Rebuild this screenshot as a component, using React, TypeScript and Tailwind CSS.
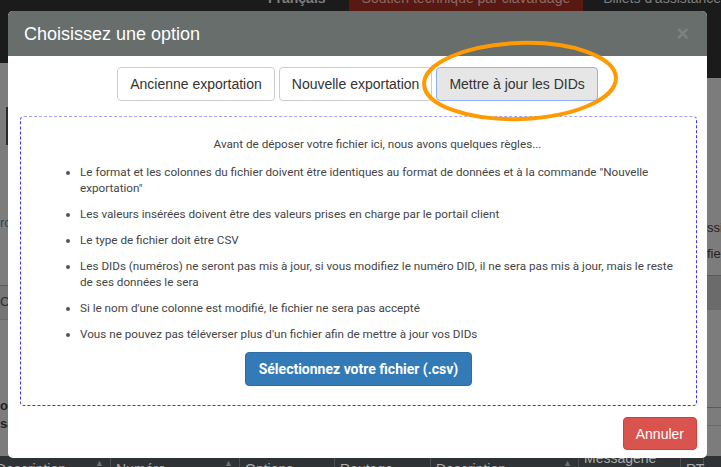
import React from 'react'

const rules = [
    'Le format et les colonnes du fichier doivent être identiques au format de données et à la commande "Nouvelle exportation"',
    'Les valeurs insérées doivent être des valeurs prises en charge par le portail client',
    'Le type de fichier doit être CSV',
    'Les DIDs (numéros) ne seront pas mis à jour, si vous modifiez le numéro DID, il ne sera pas mis à jour, mais le reste de ses données le sera',
    "Si le nom d'une colonne est modifié, le fichier ne sera pas accepté",
    "Vous ne pouvez pas téléverser plus d'un fichier afin de mettre à jour vos DIDs",
]

const columns = [
    { label: 'Description', w: 'w-[115px]', sort: true },
    { label: 'Numéro', w: 'w-[129px]', sort: true },
    { label: 'Options', w: 'w-[95px]', sort: false },
    { label: 'Routage', w: 'w-[96px]', sort: false },
    { label: 'Description', w: 'w-[148px]', sort: true },
    { label: 'Messagerie', w: 'w-[102px]', sort: false },
    { label: 'RT', w: 'w-[23px]', sort: false },
]

function Backdrop() {
    return (
        <div className="flex h-full flex-col bg-[#7c7c7c]">
            {/* Top nav */}
            <div className="flex h-[63px] shrink-0 items-start bg-[#1b1b1b] text-[14px] text-[#7e7e7e]" style={{ fontFamily: '"Liberation Sans", Arial, sans-serif' }}>
                <div className="ml-[268px] -mt-[12px] font-bold leading-[20px]">Français <span className="text-[9px]">▼</span></div>
                <div className="ml-[13px] flex h-[12px] w-[244px] justify-center bg-[#581913]">
                    <span className="-mt-[12px] leading-[20px] text-[#8a6a66]">Soutien technique par clavardage</span>
                </div>
                <div className="ml-[20px] -mt-[12px] whitespace-nowrap leading-[20px]">Billets d'assistance</div>
            </div>

            {/* Middle strips */}
            <div className="flex flex-1 justify-between text-[13px]" style={{ fontFamily: '"Liberation Sans", Arial, sans-serif' }}>
                <div className="flex w-[8px] flex-col overflow-hidden">
                    <div className="ml-auto mt-[44px] h-[38px] w-[2px] bg-[#2c2a26]" />
                    <div className="mt-[70px] whitespace-nowrap leading-[16px] text-[#2a4463]">rc</div>
                    <div className="mt-[54px] h-[1px] bg-[#5c5c5c]" />
                    <div className="h-[34px] border-b border-[#6a6a6a] bg-[#757575] pt-[8px] leading-[16px] text-[#2d2d2d]">C</div>
                    <div className="mt-[77px] whitespace-nowrap font-bold leading-[18px] text-[#1f1f1f]">ou</div>
                    <div className="whitespace-nowrap font-bold leading-[18px] text-[#1f1f1f]">sa</div>
                </div>
                <div className="flex w-[14px] flex-col overflow-hidden">
                    <div className="h-[15px] bg-[#1b1b1b]" />
                    <div className="mt-[142px] whitespace-nowrap leading-[16px] text-[#1f1f1f]">ssi</div>
                    <div className="mt-[10px] whitespace-nowrap leading-[16px] text-[#1f1f1f]">fie</div>
                    <div className="mt-[13px] h-[1px] bg-[#5a5a5a]" />
                    <div className="h-[34px] bg-[#6b6b6b]" />
                    <div className="mt-[97px] h-[1px] bg-[#5a5a5a]" />
                    <div className="mt-[17px] h-[1px] bg-[#6a6a6a]" />
                </div>
            </div>

            {/* Table header peeking below */}
            <div className="flex h-[11px] shrink-0 overflow-hidden bg-[#2f3335] text-[14px] text-[#a9acad]" style={{ fontFamily: '"Liberation Sans", Arial, sans-serif' }}>
                {columns.map((c, i) => (
                    <div key={i} className={`${c.w} flex shrink-0 items-start justify-between border-r border-[#4b4f51] ${i === 0 ? '-ml-[4px] pl-0' : 'pl-[5px]'} pr-[6px]`}>
                        <span className={`whitespace-nowrap leading-[20px] ${c.label === 'Messagerie' ? '-mt-[8px]' : 'mt-[3px]'}`}>{c.label}</span>
                        {c.sort && <span className="mt-[1px] text-[9px] leading-[12px] text-[#6d7072]">▲</span>}
                    </div>
                ))}
            </div>
        </div>
    )
}

export default function App() {
    return (
        <div className="relative h-[467px] w-[721px] overflow-hidden">
            <Backdrop />

            {/* Modal */}
            <div className="absolute left-[8px] top-[11px] w-[699px] overflow-hidden rounded-[5px] bg-white">
                <div className="flex h-[45px] items-center justify-between bg-[#676e6b] pl-[16px] pr-[18px]" style={{ fontFamily: '"Liberation Sans", Arial, sans-serif' }}>
                    <h4 className="text-[18px] leading-[20px] text-white">Choisissez une option</h4>
                    <span className="text-[22px] font-bold leading-[20px] text-[#7d8280]">×</span>
                </div>

                <div className="pl-[12px] pr-[10px] pt-[11px]">
                    <div className="flex justify-center gap-[4px] pr-[2px] text-[14px] leading-[20px] text-[#333]" style={{ fontFamily: '"Liberation Sans", Arial, sans-serif' }}>
                        <button className="h-[34px] rounded-[4px] border border-[#cccccc] bg-white px-[12px]">Ancienne exportation</button>
                        <button className="h-[34px] rounded-[4px] border border-[#cccccc] bg-white px-[12px]">Nouvelle exportation</button>
                        <button className="h-[34px] rounded-[4px] border border-[#8fb3f0] bg-[#e6e6e6] px-[12px]">Mettre à jour les DIDs</button>
                    </div>

                    <div className="mt-[15px] rounded-[4px] border border-dashed border-[#3535ff] border-t-[#a3a3ff] pb-[19px] pt-[19px] text-[11.7px] leading-[16px] text-[#454545]" style={{ fontFamily: 'Roboto, "Liberation Sans", sans-serif' }}>
                        <p className="pl-[38px] text-center">Avant de déposer votre fichier ici, nous avons quelques règles...</p>
                        <ul className="mt-[12px] list-disc pl-[59px] pr-[16px] marker:text-[#555]">
                            {rules.map((r, i) => (
                                <li key={i} className="mb-[10px]">{r}</li>
                            ))}
                        </ul>
                        <div className="flex justify-center">
                            <button className="h-[34px] rounded-[4px] border border-[#2e6da4] bg-[#337ab7] px-[13px] text-[14px] font-bold leading-[20px] text-white">
                                Sélectionnez votre fichier (.csv)
                            </button>
                        </div>
                    </div>
                </div>

                <div className="flex justify-end pb-[8px] pr-[10px] pt-[11px]" style={{ fontFamily: '"Liberation Sans", Arial, sans-serif' }}>
                    <button className="h-[33px] rounded-[4px] border border-[#d43f3a] bg-[#d9534f] px-[12px] text-[14px] leading-[20px] text-white">Annuler</button>
                </div>
            </div>

            {/* Orange highlight annotation */}
            <svg className="pointer-events-none absolute left-[420px] top-[39px]" width="202" height="84" viewBox="0 0 202 84">
                <ellipse cx="100" cy="42" rx="96" ry="38" fill="none" stroke="#ff9a00" strokeWidth="4" transform="rotate(-2 100 42)" />
            </svg>
        </div>
    )
}
